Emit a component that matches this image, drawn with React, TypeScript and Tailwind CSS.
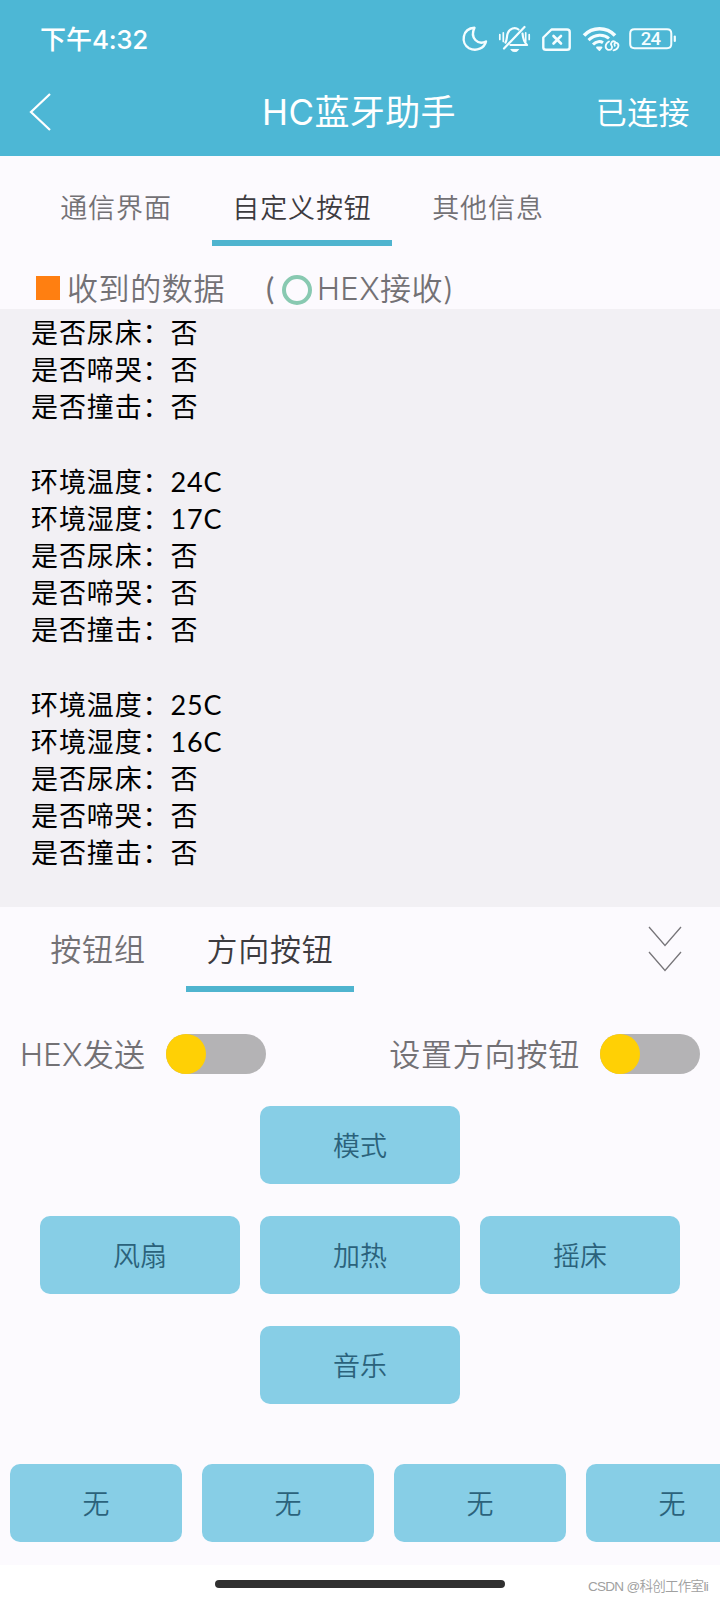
import { ReactNode, useState } from "react";

type Tab = {
    label: string;
    className: string;
}

const readings = [
    ['是否尿床：否', '是否啼哭：否', '是否撞击：否'],
    ['环境温度：24C', '环境湿度：17C', '是否尿床：否', '是否啼哭：否', '是否撞击：否'],
    ['环境温度：25C', '环境湿度：16C', '是否尿床：否', '是否啼哭：否', '是否撞击：否'],
];

const topTabs: Tab[] = [
    { label: '通信界面', className: 'w-[172px]' },
    { label: '自定义按钮', className: 'w-[180px] mx-[10px]' },
    { label: '其他信息', className: 'w-[172px]' },
];

const StatusIcons = () => (
    <svg className="h-[30px] w-[220px]" viewBox="460 24 220 30" fill="none" stroke="#f4fdff" strokeWidth="2.4" strokeLinecap="round" strokeLinejoin="round">
        {/* do not disturb */}
        <path d="M474.500 27.800C462 28.500 460.500 43.500 469 48.200C476.500 52 484.500 48 486 41.500C478 45.500 469.500 38 474.500 27.800Z" />
        {/* muted bell */}
        <path d="M505.500 42.500C507.300 40 506.500 36 507.800 33C509.500 28.500 515 26.800 518.500 29.500M522.500 33.500C523 39 524 42 527 45H510.500M504 48.500L524.500 27" strokeWidth="2.200" />
        <path d="M511 49.800C512.500 52.300 517 52.300 518.500 49.800Z" fill="#f4fdff" strokeWidth="1" />
        <path d="M499.800 34.500V39.500M503.300 32.800V41.500M525.700 32.800V41.500M529.200 34.500V39.500" strokeWidth="1.700" />
        {/* no sim */}
        <path d="M551.500 29.500H567Q569.700 29.500 569.700 32V47.500Q569.700 49.800 567 49.800H546Q543.300 49.800 543.300 47.500V37.500Z" />
        <path d="M553.500 36L561 43.500M561 36L553.500 43.500" strokeWidth="2.600" />
        {/* wifi */}
        <path d="M584 35.500C592.500 26.500 606.500 26.500 615 35.500" strokeWidth="3.600" strokeLinecap="butt" />
        <path d="M588.500 40.200C595 34 604 34 609 38.500" strokeWidth="3" strokeLinecap="butt" />
        <path d="M593 44.500C596.500 41 600.500 41 603 42.800" strokeWidth="3" strokeLinecap="butt" />
        <path d="M597 47.500L599.500 50L601.500 47.500Z" fill="#f4fdff" strokeWidth="1.800" />
        {/* linked network badge */}
        <path d="M609 41.500C605 43.500 604.500 48.500 608 49.800C611.500 50.500 613 47.500 611.500 45.500C610 43 612.500 40.200 615 41.800" strokeWidth="1.800" />
        <path d="M613.500 50.300C618 49.800 620 45 617 43C615 42 613.800 44 614.800 45.800" strokeWidth="1.800" />
        {/* battery */}
        <path d="M634.500 29.300H667Q671.300 29.300 671.300 33.500V44Q671.300 48.200 667 48.200H634.500Q630.200 48.200 630.200 44V33.500Q630.200 29.300 634.500 29.300Z" strokeWidth="2" />
        <path d="M674.800 36.500V41" strokeWidth="2.200" />
        <text x="650.500" y="45.300" textAnchor="middle" fill="#f4fdff" stroke="none" fontSize="18.5" fontWeight="500" className="font-['Roboto',sans-serif] tracking-[-0.8px]">24</text>
    </svg>
)

const Header = () => (
    <header className="h-[156px] bg-[#4db7d5] font-normal text-white">
        <div className="flex h-[78px] items-center justify-between px-10">
            <span className="text-[26px] font-medium">下午<span className="font-['Inter',sans-serif] tracking-[-0.3px]">4:32</span></span>
            <StatusIcons />
        </div>
        <div className="grid h-[68px] grid-cols-[120px_1fr_120px] items-center pl-7 pr-[30px]">
            <svg className="h-[40px] w-[24px]" viewBox="0 0 24 40" fill="none" stroke="currentColor" strokeWidth="2.2">
                <path d="M22 2L3 20L22 38" />
            </svg>
            <h1 className="whitespace-nowrap text-center font-['Inter','Noto_Sans_CJK_SC',sans-serif] text-[35px] leading-none tracking-[0.4px]">HC蓝牙助手</h1>
            <span className="whitespace-nowrap text-right text-[31px] leading-none tracking-[0.4px]">已连接</span>
        </div>
    </header>
)

const Switch = () => {
    const [on, setOn] = useState(false);

    return (
        <button
            role="switch"
            aria-checked={on}
            onClick={() => setOn(!on)}
            className={`flex h-10 w-[100px] rounded-full bg-[#b4b3b5] ${on ? "justify-end" : "justify-start"}`}
        >
            <span className="size-10 rounded-full bg-[#ffd005]" />
        </button>
    )
}

const PadButton = ({ children, className = "w-[200px]" }: { children: ReactNode; className?: string }) => (
    <button className={`h-[78px] shrink-0 rounded-[10px] bg-[#87cee6] pt-[2px] text-[27px] text-[#2b627b] ${className}`}>
        {children}
    </button>
)

const App = () => {
    const [tab, setTab] = useState(1);
    const [padTab, setPadTab] = useState(1);

    return (
        <div className="flex h-[1600px] w-[720px] flex-col overflow-hidden bg-[#fcfafe] font-['Lato','Noto_Sans_CJK_SC',sans-serif] font-[350] text-[#737175]">
            <Header />

            <nav className="flex h-[90px] pl-[30px]">
                {topTabs.map((t, i) => (
                    <button
                        key={t.label}
                        onClick={() => setTab(i)}
                        className={`flex shrink-0 flex-col items-center justify-between whitespace-nowrap pt-[32px] text-[27px] leading-10 tracking-[0.9px] ${t.className} ${tab === i ? "text-[#3d3b3f]" : ""}`}
                    >
                        {t.label}
                        {tab === i && <span className="h-[6px] w-full bg-[#4fb4cf]" />}
                    </button>
                ))}
            </nav>

            <div className="flex h-[63px] items-center pl-9 pt-[21px] text-[31px] leading-none">
                <span className="size-6 bg-[#ff7f11]" />
                <span className="ml-[7px] tracking-[0.6px]">收到的数据</span>
                <span className="ml-[41px] w-[16px] font-normal">(</span>
                <span className="mt-[3px] size-[30px] rounded-full border-4 border-[#88c9b1]" />
                <span className="ml-[5px] font-['Inter','Noto_Sans_CJK_SC',sans-serif] tracking-[0.4px]">HEX接收)</span>
            </div>

            <section className="h-[598px] bg-[#f2f0f4] pl-[31px] pt-[5px] text-[27px] leading-[37.15px] font-normal tracking-[0.9px] text-black">
                {readings.map((block, i) => (
                    <div key={i} className="mb-[37.15px]">
                        {block.map(line => <p key={line}>{line}</p>)}
                    </div>
                ))}
            </section>

            <nav className="flex h-[85px] items-stretch pl-5 pr-[38px] text-[31px] leading-10 tracking-[0.8px]">
                {['按钮组', '方向按钮'].map((label, i) => (
                    <button
                        key={label}
                        onClick={() => setPadTab(i)}
                        className={`flex flex-col items-center justify-between pt-[22px] ${i === 0 ? "mr-[10px] w-[156px]" : "w-[168px]"} ${padTab === i ? "text-[#3d3b3f]" : ""}`}
                    >
                        {label}
                        {padTab === i && <span className="h-[6px] w-full bg-[#4fb4cf]" />}
                    </button>
                ))}
                <svg className="ml-auto mt-[18px] h-[48px] w-[34px]" viewBox="0 0 34 48" fill="none" stroke="#777579" strokeWidth="1.3">
                    <path d="M1 2L17 20.500L33 2M1 27L17 45.500L33 27" />
                </svg>
            </nav>

            <div className="flex h-[124px] items-center justify-between px-5 text-[31px] leading-none">
                <div className="flex items-center">
                    <span className="w-[146px] whitespace-nowrap font-['Inter','Noto_Sans_CJK_SC',sans-serif] tracking-[0.3px]">HEX发送</span>
                    <Switch />
                </div>
                <div className="flex items-center gap-5">
                    <span className="tracking-[0.8px]">设置方向按钮</span>
                    <Switch />
                </div>
            </div>

            <div className="-mt-[10px] flex flex-col items-center gap-8">
                <PadButton>模式</PadButton>
                <div className="flex gap-5">
                    <PadButton>风扇</PadButton>
                    <PadButton>加热</PadButton>
                    <PadButton>摇床</PadButton>
                </div>
                <PadButton>音乐</PadButton>
            </div>

            <div className="mt-[60px] flex gap-5 pl-[10px]">
                {[1, 2, 3, 4].map(n => <PadButton key={n} className="w-[172px]">无</PadButton>)}
            </div>

            <footer className="mt-auto grid h-[35px] grid-cols-[1fr_290px_1fr] items-center bg-white">
                <span className="col-start-2 mt-[2px] h-2 rounded-full bg-[#303030]" />
                <span className="whitespace-nowrap pr-3 pt-[9px] text-right font-['Liberation_Sans','Noto_Sans_CJK_SC',sans-serif] text-[13.5px] tracking-[-0.7px] text-[#a0a0a0]">CSDN @科创工作室li</span>
            </footer>
        </div>
    )
}

export default App;
